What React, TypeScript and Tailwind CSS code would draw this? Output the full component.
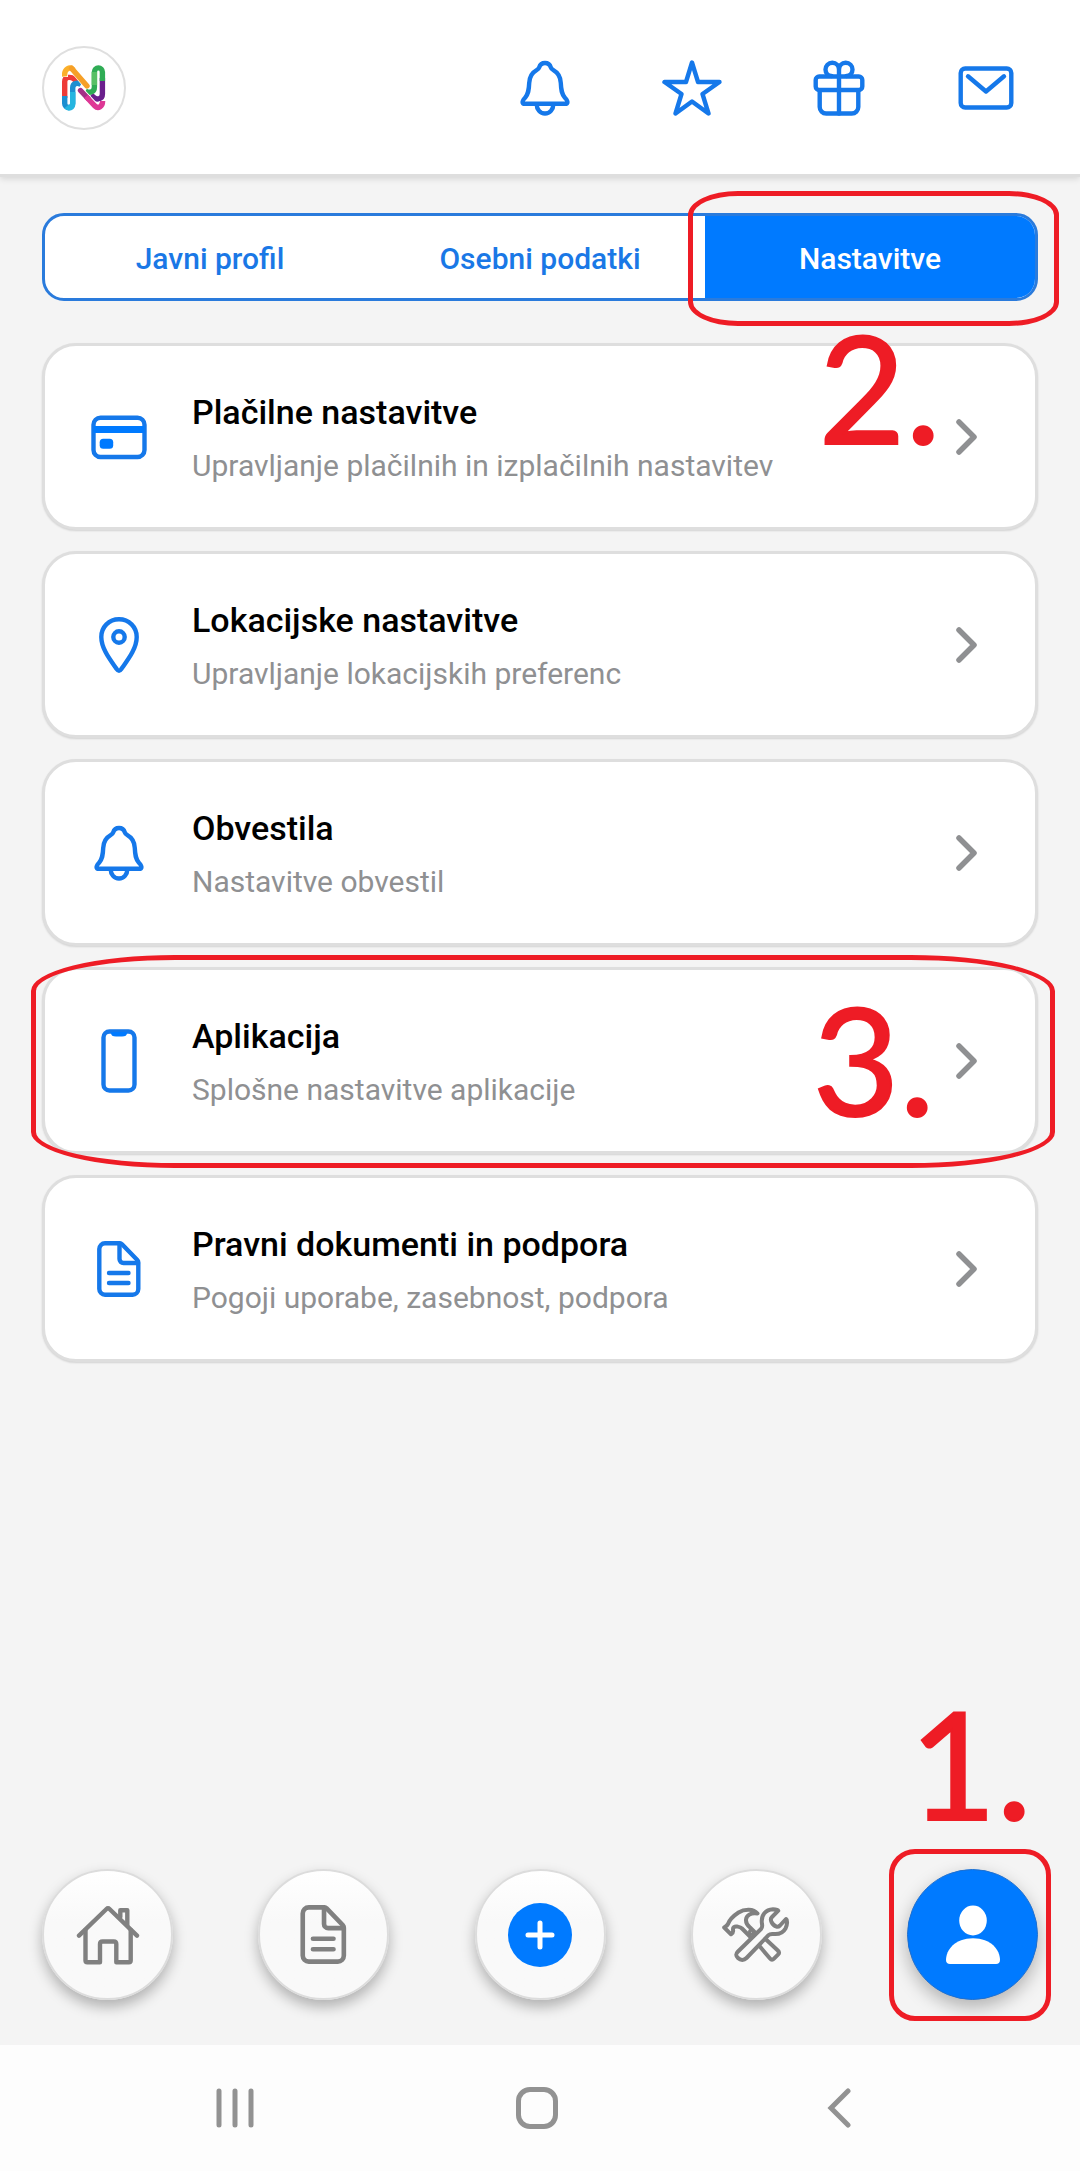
import type { ReactNode } from 'react';

type IconProps = { className?: string };

function Stroke({ className = 'size-14', box = '0 0 56 56', width = 4.4, children }: { className?: string; box?: string; width?: number; children: ReactNode }) {
  return (
    <svg
      aria-hidden="true"
      className={className}
      viewBox={box}
      fill="none"
      stroke="currentColor"
      strokeWidth={width}
      strokeLinecap="round"
      strokeLinejoin="round"
    >
      {children}
    </svg>
  );
}

function Logo() {
  return (
    <svg aria-hidden="true" className="h-[46px] w-11" viewBox="0 0 44 46" fill="none" strokeWidth="5.4">
      {/* left loop */}
      <path d="M2.700 33V16.500C2.700 11.500 9 11.500 12 14L16 17.500" stroke="#ee3a36" />
      <path d="M2.700 31V38.500a4 4 0 0 0 8 0V23C10.700 18.500 15 17 19 19.500" stroke="#1c8fd0" />
      <path d="M4.500 41.500c2 2.500 6.200 1.500 6.200-3V27" stroke="#25b5e0" />
      {/* right loop */}
      <path d="M40.400 13V29c0 5.500-6 6-8.500 3.500L29 30" stroke="#6a1f8c" />
      <path d="M40.400 16V6.900a4 4 0 0 0-8 0V22c0 5-4.400 6.500-8.900 4" stroke="#2fac55" />
      <path d="M32.400 20V7" stroke="#58c066" />
      {/* diagonals */}
      <path d="M2.500 12V8C2.500 2.500 8 1 11 4.200L25.500 21.500" stroke="#fff" strokeWidth="7" />
      <path d="M2.600 11.500C2 3.500 8 .8 11.500 5" stroke="#fbb02a" />
      <path d="M9.500 3.200L25 21" stroke="#f6a027" strokeLinecap="round" />
      <path d="M18.500 25.500L33 41c3 3 7.600 1 7.600-5" stroke="#fff" strokeWidth="7" />
      <path d="M18.500 25.500L26 33.500" stroke="#a52f86" strokeLinecap="round" />
      <path d="M24 31.500L33 41c3 3 7.600 1 7.600-5" stroke="#de3795" />
    </svg>
  );
}

function BellIcon() {
  return (
    <Stroke>
      <path d="M28 3c-2.800 0-5 1.800-5.800 4.400-.4 1.300-1.300 2-2.600 2.700C14.700 12.800 12.400 17.600 12.200 23c-.3 7.600-.9 10.800-4 14.600-1.600 1.900-3 3.300-2.600 4.900.3 1 1.200 1.300 2.200 1.300h40.400c1 0 1.900-.3 2.200-1.300.4-1.600-1-3-2.600-4.900-3.100-3.800-3.700-7-4-14.600-.2-5.400-2.500-10.200-7.400-12.900-1.300-.7-2.200-1.400-2.600-2.700C33 4.800 30.800 3 28 3z" />
      <path d="M19.700 44.500c0 5 3.500 9 8.300 9s8.300-4 8.300-9" />
    </Stroke>
  );
}

function StarIcon() {
  return (
    <Stroke className="-mx-0.5 h-14 w-15" box="0 0 60 56">
      <path d="M30 2.500L36 22H57.500L40.500 34L46.500 53.500L30 41.500L13.500 53.500L19.500 34L2.500 22H24Z" />
    </Stroke>
  );
}

function GiftIcon() {
  return (
    <Stroke>
      <rect x="4.700" y="16.500" width="46.600" height="13.500" rx="3.500" />
      <path d="M8.700 30.500v16.500a6.500 6.500 0 0 0 6.500 6.500h25.600a6.500 6.500 0 0 0 6.500-6.500V30.500" />
      <path d="M28 16.500v37" />
      <path d="M28 16V9.800c0-4-2.800-7-6.700-7s-6.800 3-6.800 6.700 2.500 6.500 6 6.500M28 16V9.800c0-4 2.800-7 6.700-7s6.800 3 6.800 6.700-2.500 6.500-6 6.500" />
    </Stroke>
  );
}

function MailIcon() {
  return (
    <Stroke>
      <rect x="2.700" y="8.500" width="50.600" height="39" rx="4.500" />
      <path d="M10 16.300L28 31.500L46 16.300" />
    </Stroke>
  );
}

function CardIcon() {
  return (
    <Stroke>
      <rect x="2.500" y="8.700" width="51" height="39.300" rx="7" />
      <rect x="2.500" y="17" width="51" height="7" fill="#007aff" stroke="none" />
      <rect x="8.700" y="29.700" width="13.500" height="10" rx="3.500" fill="#007aff" stroke="none" />
    </Stroke>
  );
}

function PinIcon() {
  return (
    <Stroke>
      <path d="M28 53.700c-1.500 0-2-1.200-3-2.600C19 42.500 10.300 31.500 10.300 20 10.300 10 18 2.300 28 2.300S45.700 10 45.700 20C45.700 31.500 37 42.500 31 51.100c-1 1.400-1.500 2.600-3 2.600z" />
      <circle cx="28" cy="20" r="5.700" />
    </Stroke>
  );
}

function PhoneIcon() {
  return (
    <Stroke className="h-16 w-14" box="0 0 56 64">
      <rect x="12.500" y="2.500" width="31" height="59" rx="6" />
      <path d="M21 4h14c0 2-1.500 2.500-4 2.500h-6c-2.500 0-4-.5-4-2.500z" fill="#007aff" stroke="#007aff" strokeWidth="2" />
    </Stroke>
  );
}

function DocIcon({ className }: IconProps) {
  return (
    <Stroke className={className}>
      <path d="M29 2.300H14A5.700 5.700 0 0 0 8.300 8v40a5.700 5.700 0 0 0 5.700 5.700h27.600a5.700 5.700 0 0 0 5.700-5.700V21.500c0-1-.3-1.800-1-2.500L31 3.300c-.6-.6-1.200-1-2-1z" />
      <path d="M28.500 3v15a4 4 0 0 0 4 4H47" />
      <path d="M18 32h19.500M18 42h19.500" />
    </Stroke>
  );
}

function HouseIcon() {
  return (
    <Stroke className="size-16" box="0 0 64 64">
      <path d="M3 32.600L30.500 6c1-1 2-1 3 0L61 32.600" />
      <path d="M9.500 27v30.500c0 1.200.6 1.800 1.800 1.800H24V41c0-1.600.9-2.500 2.500-2.500h11.300c1.600 0 2.500.9 2.500 2.500v18.300h12.600c1.200 0 1.800-.6 1.800-1.800V27" />
      <path d="M44.300 14V7.200h7V22" />
    </Stroke>
  );
}

function ToolsIcon() {
  return (
    <Stroke className="h-16 w-17" box="0 0 68 64" width={4}>
      {/* wrench */}
      <path d="M16 48.500L39 26c1.500-1.500 1.500-2.500 1-5C38.500 12 44 6.500 51 6.200c3 0 5 .8 5.300 1.500L50 14c-1.500 1.500-1.500 3-.5 5 1.200 2.500 3 4 5 4.700 1.500.5 2.500-.2 3.500-1.200l6-6.500c1.500 1 1.500 5.500-.5 9.500-2.500 4.500-7 6-12 5.500-2-.3-3.500-.3-5 1.200L24.500 55c-2.500 2.500-6 2.500-8.500 0s-2.500-4 0-6.500z" />
      {/* hammer head */}
      <path d="M2.200 24.500L9 31.300c1.500-1 2.500-2.500 2-4.500-.3-2.300 1.500-3.800 4-3.300 2 .4 3.500.5 5 2l8.500 8.500M2.200 24.500c1.500-1 2.800-1.500 3.800-3.500 1.500-4.500 6-8.500 10.500-11.500C22.500 5.700 31.500 5.500 35.500 10.500 29 9.500 24.500 12 24 16.500c-.3 3.500 1 5.500 4 8l4.500 4.500" />
      <circle cx="29.500" cy="29" r="1.500" />
      {/* hammer handle */}
      <path d="M37 42.500L48 55.500c1.500 1.700 2.500 1.700 4 .2l4-4c1.500-1.500 1.300-2.700-.2-4.200L43.500 36" />
    </Stroke>
  );
}

function PersonIcon() {
  return (
    <svg aria-hidden="true" className="size-16" viewBox="0 0 64 64" fill="#fff">
      <ellipse cx="32" cy="17.500" rx="13.800" ry="15" />
      <path d="M5 57c0-10 9-21.700 27-21.700S59 47 59 57c0 2.800-1.500 4-4 4H9c-2.500 0-4-1.200-4-4z" />
    </svg>
  );
}

function PlusIcon() {
  return (
    <svg aria-hidden="true" className="size-16" viewBox="0 0 64 64" stroke="#fff" strokeWidth="5" strokeLinecap="round">
      <circle cx="32" cy="32" r="32" fill="#007aff" stroke="none" />
      <path d="M32 20v24M20 32h24" />
    </svg>
  );
}

const headerLinks = [
  { name: 'Obvestila', icon: <BellIcon /> },
  { name: 'Priljubljene', icon: <StarIcon /> },
  { name: 'Darila', icon: <GiftIcon /> },
  { name: 'Sporočila', icon: <MailIcon /> },
];

const settings = [
  { title: 'Plačilne nastavitve', text: 'Upravljanje plačilnih in izplačilnih nastavitev', icon: <CardIcon /> },
  { title: 'Lokacijske nastavitve', text: 'Upravljanje lokacijskih preferenc', icon: <PinIcon /> },
  { title: 'Obvestila', text: 'Nastavitve obvestil', icon: <BellIcon /> },
  { title: 'Aplikacija', text: 'Splošne nastavitve aplikacije', icon: <PhoneIcon /> },
  { title: 'Pravni dokumenti in podpora', text: 'Pogoji uporabe, zasebnost, podpora', icon: <DocIcon /> },
];

const navLinks = [
  { name: 'Domov', icon: <HouseIcon /> },
  { name: 'Dokumenti', icon: <DocIcon className="size-[59px]" /> },
  { name: 'Dodaj', icon: <PlusIcon /> },
  { name: 'Orodja', icon: <ToolsIcon /> },
];

const stepText = 'pointer-events-none absolute z-10 font-[Lato,sans-serif] text-[150px] leading-none text-[#ee1c25] [-webkit-text-stroke:2px_#ee1c25]';
const stepBox = 'pointer-events-none absolute z-10 border-5 border-[#ee1c25]';

export default function App() {
  return (
    <div className="flex min-h-screen flex-col bg-[#f4f4f4] font-[Roboto,sans-serif]">
      {/* Header */}
      <header className="flex h-[177px] items-center justify-between border-b-3 border-[#dedede] bg-white pt-0.5 pr-[66px] pl-[42px] shadow-[0_2px_6px_rgba(0,0,0,0.12)]">
        <a href="#" aria-label="Profil" className="flex size-21 items-center justify-center rounded-full border-2 border-[#dfdfdf]">
          <Logo />
        </a>
        <nav className="flex gap-[91px] text-[#1578ea]">
          {headerLinks.map((link) => (
            <a key={link.name} href="#" aria-label={link.name}>
              {link.icon}
            </a>
          ))}
        </nav>
      </header>

      <main className="flex-1 px-[42px] pt-9">
        {/* Tabs */}
        <div className="relative">
          <div className="grid h-22 grid-cols-3 overflow-hidden rounded-[22px] border-3 border-[#2a7bdc] bg-white text-[30px] font-medium text-[#1a78e6]">
            <button type="button" className="pt-0.5">Javni profil</button>
            <button type="button" className="pt-0.5">Osebni podatki</button>
            <button type="button" className="bg-[#007aff] pt-0.5 text-white">Nastavitve</button>
          </div>
          <div className={`${stepBox} -top-[22px] -right-[21px] -bottom-[25px] w-[371px] rounded-[50px/24px]`} />
        </div>

        {/* Settings list */}
        <ul className="mt-[42px] flex flex-col gap-[21px]">
          {settings.map((item, i) => (
            <li key={item.title} className="relative">
              <a
                href="#"
                className="flex h-[187px] items-center rounded-[34px] border-3 border-[#dedede] bg-white pr-[57px] pl-[46px] shadow-[0_1px_2px_rgba(0,0,0,0.14)]"
              >
                <span className="text-[#1578ea]">{item.icon}</span>
                <span className="ml-[45px] flex flex-1 flex-col pt-1">
                  <span className="text-[34px] leading-[54px] font-medium text-black">{item.title}</span>
                  <span className="text-[30px] leading-[54px] text-[#8f9092]">{item.text}</span>
                </span>
                <svg aria-hidden="true" className="h-9 w-6 text-[#8f9092]" viewBox="0 0 24 36" fill="none" stroke="currentColor" strokeWidth="5.5" strokeLinecap="round" strokeLinejoin="round">
                  <path d="M5 3L20 18L5 33" />
                </svg>
              </a>
              {i === 0 && <span className={`${stepText} -top-8 right-[97px]`}>2.</span>}
              {i === 3 && (
                <>
                  <span className={`${stepText} top-4 right-[103px]`}>3.</span>
                  <div className={`${stepBox} -top-3 -right-[17px] -bottom-3.5 -left-[11px] rounded-[144px/36px]`} />
                </>
              )}
            </li>
          ))}
        </ul>
      </main>

      {/* Bottom navigation */}
      <nav className="flex justify-between px-[42px] pb-[45px] text-[#808080]">
        {navLinks.map((link) => (
          <a
            key={link.name}
            href="#"
            aria-label={link.name}
            className="flex size-[131px] items-center justify-center rounded-full border-2 border-[#dcdcdc] bg-linear-to-b from-white to-[#f9f9f9] to-40% shadow-[0_7px_14px_rgba(0,0,0,0.28)]"
          >
            {link.icon}
          </a>
        ))}
        <div className="relative">
          <span className={`${stepText} -top-[182px] right-1.5`}>1.</span>
          <a
            href="#"
            aria-label="Profil"
            className="flex size-[131px] items-center justify-center rounded-full border border-[#1d6fd0] bg-[#007aff] shadow-[0_7px_18px_rgba(0,0,0,0.28)]"
          >
            <PersonIcon />
          </a>
          <div className={`${stepBox} -top-5 -right-[13px] -bottom-[21px] -left-[18px] rounded-[26px]`} />
        </div>
      </nav>

      {/* System bar */}
      <footer className="grid h-[126px] grid-cols-3 place-items-center bg-[#fdfdfd] pr-[90px] pl-[84px] text-[#929292]">
        <button type="button" aria-label="Nedavno">
          <svg className="h-10 w-[38px]" viewBox="0 0 38 40" stroke="currentColor" strokeWidth="5" strokeLinecap="round">
            <path d="M3 3v34M19 3v34M35 3v34" />
          </svg>
        </button>
        <button type="button" aria-label="Domov">
          <svg className="size-[42px]" viewBox="0 0 42 42" fill="none" stroke="currentColor" strokeWidth="5">
            <rect x="2.500" y="2.500" width="37" height="37" rx="11.500" />
          </svg>
        </button>
        <button type="button" aria-label="Nazaj">
          <svg className="h-10 w-6" viewBox="0 0 24 40" fill="none" stroke="currentColor" strokeWidth="5" strokeLinecap="round">
            <path d="M21 3L4 20L21 37" />
          </svg>
        </button>
      </footer>
    </div>
  );
}
